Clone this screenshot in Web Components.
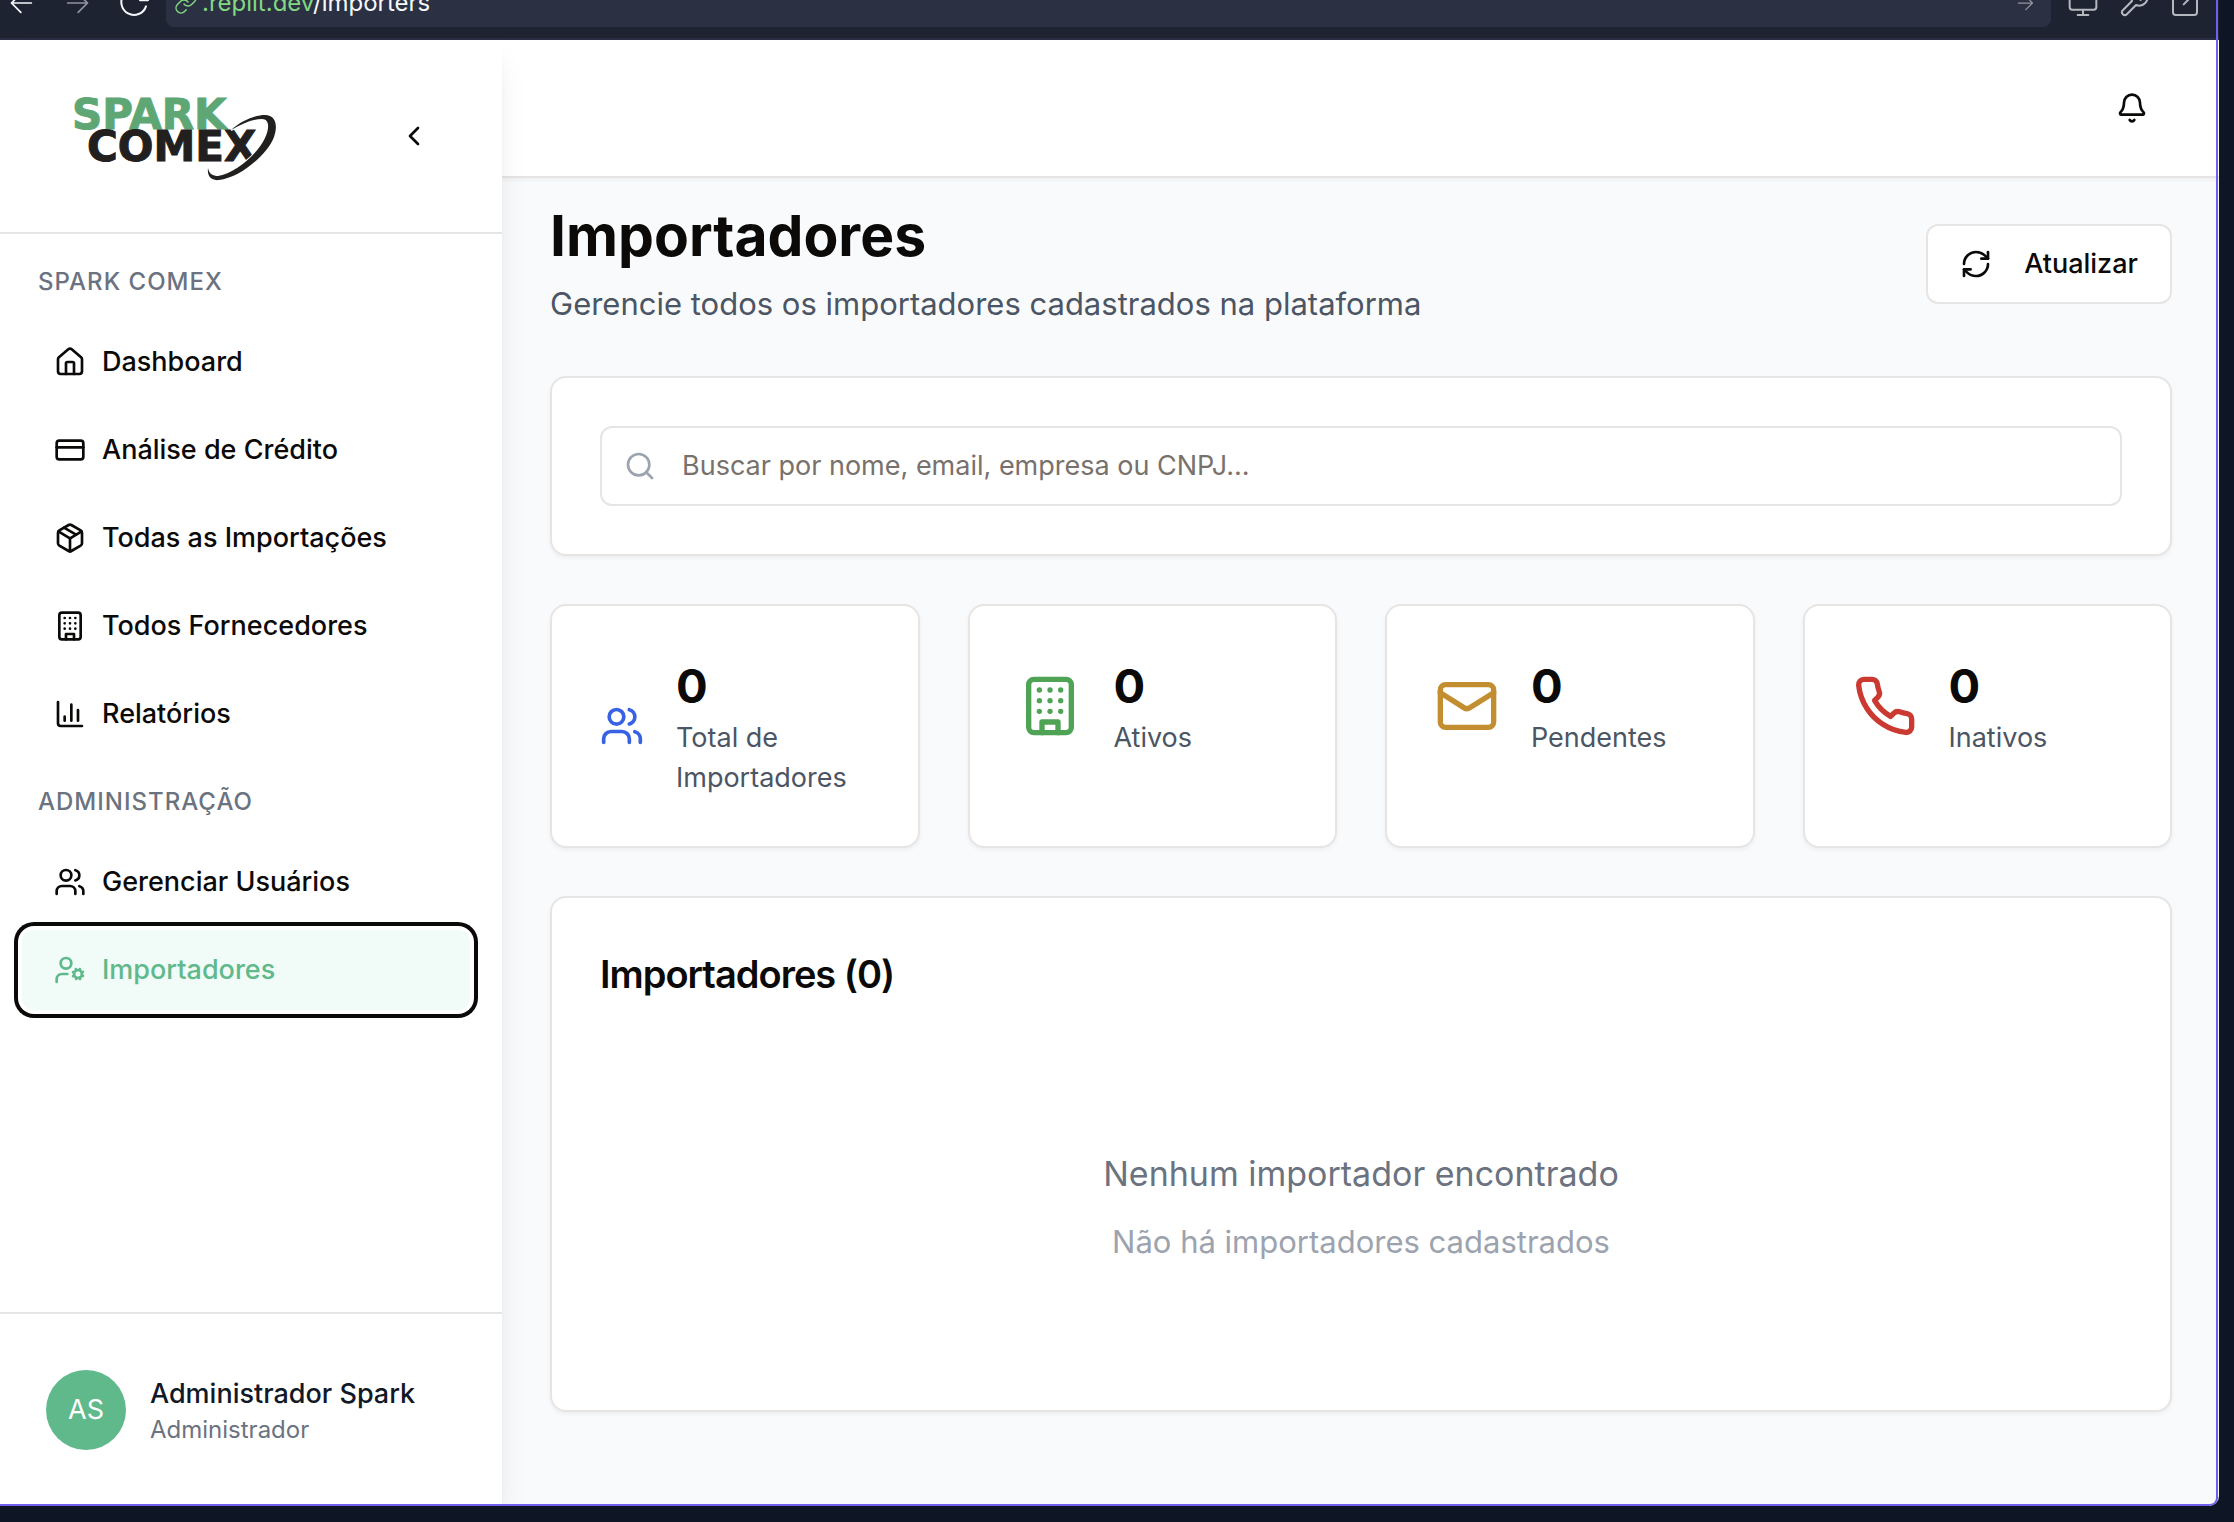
<!DOCTYPE html>
<html lang="pt-BR">
<head>
<meta charset="utf-8">
<title>Spark Comex – Importadores</title>
<style>
  html, body { margin: 0; height: 100%; }
  body {
    background: #0e1525;
    color: #0c0a09;
    font-family: Inter, "Liberation Sans", sans-serif;
    font-size: 27px;
    line-height: 40px;
    --line: #e7e5e4;
    --brand: #5fb98b;
    --muted: #6b7280;
    --soft: #4b5563;
  }
</style>
</head>
<body>
<preview-frame>
  <browser-bar slot="bar"></browser-bar>
  <side-bar slot="side">
    <nav-section label="Spark Comex">
      <nav-item icon="house">Dashboard</nav-item>
      <nav-item icon="card">Análise de Crédito</nav-item>
      <nav-item icon="package">Todas as Importações</nav-item>
      <nav-item icon="building">Todos Fornecedores</nav-item>
      <nav-item icon="chart">Relatórios</nav-item>
    </nav-section>
    <nav-section label="Administração">
      <nav-item icon="users">Gerenciar Usuários</nav-item>
      <nav-item icon="usercog" active>Importadores</nav-item>
    </nav-section>
    <user-badge slot="user" initials="AS" name="Administrador Spark" role-name="Administrador"></user-badge>
  </side-bar>
  <top-bar slot="top"></top-bar>
  <page-heading>
    <span slot="title">Importadores</span>
    <span slot="subtitle">Gerencie todos os importadores cadastrados na plataforma</span>
    <action-button slot="action" icon="refresh">Atualizar</action-button>
  </page-heading>
  <ui-card><search-box placeholder="Buscar por nome, email, empresa ou CNPJ..."></search-box></ui-card>
  <stat-row>
    <ui-card><stat-tile icon="users" value="0" style="--tone:#3662e3;--icon-width:44px">Total de Importadores</stat-tile></ui-card>
    <ui-card><stat-tile icon="building" value="0" style="--tone:#4ea354">Ativos</stat-tile></ui-card>
    <ui-card><stat-tile icon="mail" value="0" style="--tone:#c28e30">Pendentes</stat-tile></ui-card>
    <ui-card><stat-tile icon="phone" value="0" style="--tone:#cb3a31">Inativos</stat-tile></ui-card>
  </stat-row>
  <ui-card>
    <importer-list count="0"></importer-list>
  </ui-card>
</preview-frame>

<script>
const ICONS = {
  house: '<path d="M15 21v-8a1 1 0 0 0-1-1h-4a1 1 0 0 0-1 1v8"/><path d="M3 10a2 2 0 0 1 .709-1.528l7-5.999a2 2 0 0 1 2.582 0l7 5.999A2 2 0 0 1 21 10v9a2 2 0 0 1-2 2H5a2 2 0 0 1-2-2z"/>',
  card: '<rect x="2" y="5" width="20" height="14" rx="2"/><path d="M2 10h20"/>',
  package: '<path d="M11 21.73a2 2 0 0 0 2 0l7-4A2 2 0 0 0 21 16V8a2 2 0 0 0-1-1.73l-7-4a2 2 0 0 0-2 0l-7 4A2 2 0 0 0 3 8v8a2 2 0 0 0 1 1.73z"/><path d="M12 22V12"/><path d="m3.3 7 7.703 4.734a2 2 0 0 0 1.994 0L20.7 7"/><path d="m7.5 4.27 9 5.15"/>',
  building: '<rect x="4" y="2" width="16" height="20" rx="2"/><path d="M9 22v-4h6v4"/><path d="M8 6h.01M12 6h.01M16 6h.01M8 10h.01M12 10h.01M16 10h.01M8 14h.01M12 14h.01M16 14h.01"/>',
  chart: '<path d="M3 3v16a2 2 0 0 0 2 2h16"/><path d="M18 17V9"/><path d="M13 17V5"/><path d="M8 17v-3"/>',
  users: '<path d="M16 21v-2a4 4 0 0 0-4-4H6a4 4 0 0 0-4 4v2"/><circle cx="9" cy="7" r="4"/><path d="M22 21v-2a4 4 0 0 0-3-3.87"/><path d="M16 3.13a4 4 0 0 1 0 7.75"/>',
  usercog: '<circle cx="18" cy="15" r="3"/><circle cx="9" cy="7" r="4"/><path d="M10 15H6a4 4 0 0 0-4 4v2"/><path d="m21.7 16.4-.9-.3M15.2 13.9l-.9-.3M16.6 18.7l.3-.9M19.1 12.2l.3-.9M19.6 18.7l-.4-1M16.8 12.3l-.4-1M14.3 16.6l1-.4M20.7 13.8l1-.4"/>',
  mail: '<rect x="2" y="4" width="20" height="16" rx="2"/><path d="m22 7-8.97 5.7a1.94 1.94 0 0 1-2.06 0L2 7"/>',
  phone: '<path d="M22 16.92v3a2 2 0 0 1-2.18 2 19.79 19.79 0 0 1-8.63-3.07 19.5 19.5 0 0 1-6-6 19.79 19.79 0 0 1-3.07-8.67A2 2 0 0 1 4.11 2h3a2 2 0 0 1 2 1.72 12.84 12.84 0 0 0 .7 2.81 2 2 0 0 1-.45 2.11L8.09 9.91a16 16 0 0 0 6 6l1.27-1.27a2 2 0 0 1 2.11-.45 12.84 12.84 0 0 0 2.81.7A2 2 0 0 1 22 16.92z"/>',
  refresh: '<path d="M3 12a9 9 0 0 1 9-9 9.75 9.75 0 0 1 6.74 2.74L21 8"/><path d="M21 3v5h-5"/><path d="M21 12a9 9 0 0 1-9 9 9.75 9.75 0 0 1-6.74-2.74L3 16"/><path d="M8 16H3v5"/>',
  search: '<circle cx="11" cy="11" r="8"/><path d="m21 21-4.3-4.3"/>',
  bell: '<path d="M10.268 21a2 2 0 0 0 3.464 0"/><path d="M3.262 15.326A1 1 0 0 0 4 17h16a1 1 0 0 0 .74-1.673C19.41 13.956 18 12.499 18 8A6 6 0 0 0 6 8c0 4.499-1.411 5.956-2.738 7.326"/>',
  chevron: '<path d="m15 18-6-6 6-6"/>',
  back: '<path d="M20 12H4M11 4l-8 8 8 8"/>',
  forward: '<path d="M4 12h16M13 4l8 8-8 8"/>',
  reload: '<path d="M21 14.500a9.500 9.500 0 1 1-2-9.500L22 8M22.500 10h-6"/>',
  link: '<path d="M10 13a5 5 0 0 0 7.540.54l3-3a5 5 0 0 0-7.070-7.070l-1.720 1.710"/><path d="M14 11a5 5 0 0 0-7.540-.54l-3 3a5 5 0 0 0 7.070 7.070l1.710-1.710"/>',
  monitor: '<rect x="2" y="3" width="20" height="14" rx="2"/><path d="M8 21h8M12 17v4"/>',
  wrench: '<path d="M14.700 6.300a1 1 0 0 0 0 1.400l1.600 1.600a1 1 0 0 0 1.400 0l3.770-3.770a6 6 0 0 1-7.940 7.940l-6.910 6.910a2.120 2.120 0 0 1-3-3l6.910-6.910a6 6 0 0 1 7.940-7.940l-3.760 3.760z"/>',
  external: '<path d="M21 10v9a2 2 0 0 1-2 2H5a2 2 0 0 1-2-2V5a2 2 0 0 1 2-2h8M21 3l-10 10M16 3h5v5"/>'
};

/* Registers an element whose shadow root is filled from css + markup. */
function define(tag, css, markup) {
  customElements.define(tag, class extends HTMLElement {
    connectedCallback() {
      if (this.shadowRoot) return;
      const html = typeof markup === 'function' ? markup(this) : markup;
      this.attachShadow({ mode: 'open' }).innerHTML =
        `<style>*{box-sizing:border-box}${css}</style>${html}`;
    }
  });
}
const attr = (el, name) => el.getAttribute(name) || '';

define('ui-icon',
  `:host{display:block;flex:none;width:32px;height:32px}
   svg{display:block;width:100%;height:100%;fill:none;stroke:currentColor;stroke-width:var(--stroke,2);stroke-linecap:round;stroke-linejoin:round}`,
  el => `<svg viewBox="0 0 24 24" aria-hidden="true">${ICONS[attr(el, 'name')]}</svg>`);

define('preview-frame',
  `:host{display:flex;flex-direction:column;position:relative;min-height:calc(100vh - 16px);margin:0 15px 16px 0;background:#f9fafc;border-radius:0 0 10px 0;overflow:hidden}
   :host::after{content:"";position:absolute;inset:0 1px 0 0;border:solid #7160ee;border-width:0 2px 2px 0;border-radius:0 0 8px 0;pointer-events:none;z-index:3}
   .body{flex:1;display:flex}
   .side{display:flex;flex:none;width:502px;position:relative;z-index:1}
   .main{flex:1;min-width:0}
   main{display:flex;flex-direction:column;gap:48px;padding:22px 47px 48px 48px}`,
  `<slot name="bar"></slot>
   <div class="body"><div class="side"><slot name="side"></slot></div>
   <div class="main"><slot name="top"></slot><main><slot></slot></main></div></div>`);

define('browser-bar',
  `:host{display:flex;align-items:flex-end;height:40px;overflow:hidden;background:#1e2332;border-bottom:2px solid #2b2e42;box-sizing:border-box}
   .row{flex:none;width:100%;height:70px;display:flex;align-items:center;padding:0 18px 0 8px;color:#f5f9fc;--stroke:1.5}
   button{all:unset;box-sizing:border-box;display:block}
   .nav{display:flex;gap:27px;margin-right:16px}
   .dim{color:#8f949e}
   .url{flex:1;height:48px;border-radius:8px;background:#2c3043;display:flex;align-items:center;gap:4px;padding:0 16px 0 8px;font-size:24px;line-height:32px}
   .url ui-icon{width:24px;height:24px}
   .url>ui-icon{color:#82d782}
   a{flex:1;color:inherit;text-decoration:none}
   b{font-weight:400;color:#82d782}
   .tools{display:flex;gap:19px;margin-left:16px;color:#b4b8bf}`,
  `<div class="row">
     <div class="nav">
       <button aria-label="Voltar"><ui-icon name="back" style="width:28px"></ui-icon></button>
       <button aria-label="Avançar" class="dim"><ui-icon name="forward" style="width:28px"></ui-icon></button>
       <button aria-label="Recarregar"><ui-icon name="reload"></ui-icon></button>
     </div>
     <div class="url"><ui-icon name="link"></ui-icon><a href="#importers"><b>.replit.dev</b>/importers</a>
       <button aria-label="Ir" class="dim"><ui-icon name="forward" style="width:20px;height:20px"></ui-icon></button></div>
     <div class="tools">
       <button aria-label="Dispositivo"><ui-icon name="monitor"></ui-icon></button>
       <button aria-label="Ferramentas"><ui-icon name="wrench"></ui-icon></button>
       <button aria-label="Abrir em nova aba"><ui-icon name="external"></ui-icon></button>
     </div>
   </div>`);

define('spark-logo',
  `:host{display:block}
   svg{display:block;width:208px;height:92px;overflow:visible}
   text{font-family:"DejaVu Sans",sans-serif;font-weight:700;font-size:42px;stroke-width:1px}`,
  `<svg viewBox="0 0 208 92" role="img" aria-label="Spark Comex">
     <text x="0" y="39" fill="#5ea775" stroke="#5ea775">SPARK</text>
     <text x="15" y="71" fill="#22201f" stroke="#22201f">COMEX</text>
     <path fill="#22201f" stroke="#fff" stroke-width="2" paint-order="stroke" d="M159 40C170 30 184 25 193 25C204 25 206 36 202 47C196 64 168 88 147 90C139 91 135 86 136 78C137 84 141 86 146 86C162 84 186 64 193 48C198 37 197 29 190 29C180 29 170 34 159 40Z"/>
   </svg>`);

define('side-bar',
  `:host{display:flex;flex-direction:column;flex:1;background:#fff;box-shadow:0 20px 30px -6px rgba(0,0,0,.1),0 8px 12px -8px rgba(0,0,0,.1)}
   header{display:flex;align-items:center;justify-content:space-between;height:194px;padding:0 72px;border-bottom:2px solid #e5e5e5}
   button{all:unset;display:block}
   nav{flex:1;display:flex;flex-direction:column;gap:32px;padding:32px 32px 32px 22px}
   footer{border-top:2px solid #e5e5e5;padding:56px 46px}`,
  `<header><spark-logo></spark-logo><button aria-label="Recolher menu"><ui-icon name="chevron"></ui-icon></button></header>
   <nav><slot></slot></nav>
   <footer><slot name="user"></slot></footer>`);

define('nav-section',
  `:host{display:block}
   h3{margin:0 0 24px;padding:0 16px;font-size:24px;line-height:32px;font-weight:500;letter-spacing:1px;text-transform:uppercase;color:var(--muted)}
   .items{display:flex;flex-direction:column;gap:8px}`,
  el => `<h3>${attr(el, 'label')}</h3><div class="items"><slot></slot></div>`);

define('nav-item',
  `:host{display:block}
   a{display:flex;align-items:center;gap:16px;height:80px;padding:0 32px;border-radius:12px;color:inherit;text-decoration:none;font-weight:500}
   :host([active]) a{background:#f1fbf8;color:var(--brand);box-shadow:0 0 0 4px #fff,0 0 0 8px #0c0a09}`,
  el => `<a href="#"><ui-icon name="${attr(el, 'icon')}"></ui-icon><span><slot></slot></span></a>`);

define('user-badge',
  `:host{display:flex;align-items:center;gap:24px}
   .avatar{display:grid;place-items:center;width:80px;height:80px;border-radius:50%;background:var(--brand);color:#fff}
   .name{font-weight:500;color:#111827}
   .role{font-size:24px;line-height:32px;color:var(--muted)}`,
  el => `<div class="avatar">${attr(el, 'initials')}</div>
   <div><div class="name">${attr(el, 'name')}</div><div class="role">${attr(el, 'role-name')}</div></div>`);

define('top-bar',
  `:host{display:flex;align-items:center;justify-content:flex-end;height:138px;box-sizing:border-box;padding:0 71px;background:#fff;border-bottom:2px solid var(--line);box-shadow:0 2px 4px rgba(0,0,0,.05)}
   button{all:unset;display:block}`,
  `<button aria-label="Notificações"><ui-icon name="bell"></ui-icon></button>`);

define('page-heading',
  `:host{display:flex;align-items:center;justify-content:space-between}
   h1{margin:0 0 8px;font-size:57px;line-height:72px;font-weight:700}
   p{margin:0;font-size:31px;line-height:48px;color:var(--soft)}`,
  `<div><h1><slot name="title"></slot></h1><p><slot name="subtitle"></slot></p></div><slot name="action"></slot>`);

define('action-button',
  `:host{display:block}
   button{display:flex;align-items:center;gap:32px;height:80px;padding:0 32px;border:2px solid var(--line);border-radius:12px;background:#fff;color:inherit;font:inherit;font-weight:500}`,
  el => `<button type="button"><ui-icon name="${attr(el, 'icon')}"></ui-icon><span><slot></slot></span></button>`);

define('ui-card',
  `:host{display:block;box-sizing:border-box;min-width:0;padding:48px;border:2px solid var(--line);border-radius:16px;background:#fff;box-shadow:0 2px 4px rgba(0,0,0,.05)}`,
  `<slot></slot>`);

define('search-box',
  `:host{display:block}
   label{display:flex;align-items:center;gap:26px;height:80px;padding:0 22px;border:2px solid var(--line);border-radius:12px}
   ui-icon{color:#9ca3af}
   input{flex:1;min-width:0;height:40px;padding:0;border:0;outline:0;background:none;color:inherit;font:inherit}
   input::placeholder{color:#78716c;opacity:1}`,
  el => `<label><ui-icon name="search"></ui-icon><input type="text" aria-label="Buscar importadores" placeholder="${attr(el, 'placeholder')}"></label>`);

define('stat-row',
  `:host{display:grid;grid-template-columns:repeat(4,minmax(0,1fr));gap:48px}`,
  `<slot></slot>`);

define('stat-tile',
  `:host{display:flex;align-items:center;gap:32px}
   ui-icon{width:var(--icon-width,64px);height:64px;color:var(--tone)}
   .value{font-size:47px;line-height:64px;font-weight:700}
   .label{color:var(--soft)}`,
  el => `<ui-icon name="${attr(el, 'icon')}"></ui-icon>
   <div><div class="value">${attr(el, 'value')}</div><div class="label"><slot></slot></div></div>`);

define('importer-list',
  `:host{display:block}
   h2{margin:0 0 48px;font-size:38px;line-height:56px;font-weight:600;letter-spacing:-1px}
   .empty{display:flex;flex-direction:column;gap:16px;padding:96px 0;text-align:center}
   p{margin:0;font-size:34px;line-height:56px;color:var(--muted)}
   p+p{font-size:31px;line-height:48px;color:#9ca3af}`,
  el => `<h2>Importadores (${attr(el, 'count')})</h2>
   <div class="empty"><p>Nenhum importador encontrado</p><p>Não há importadores cadastrados</p></div>`);
</script>
</body>
</html>
